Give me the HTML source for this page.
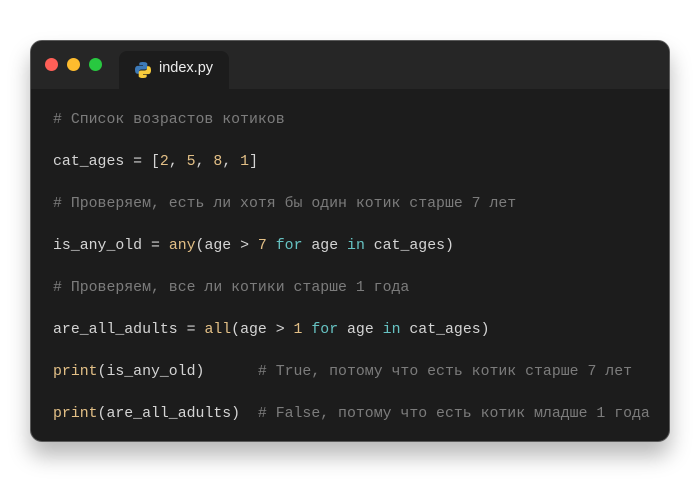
<!DOCTYPE html>
<html><head><meta charset="utf-8"><style>
html,body{margin:0;padding:0;background:#fff;width:700px;height:482px;overflow:hidden}
.win{position:absolute;left:30px;top:40px;width:638px;height:400px;background:#1c1c1c;border:1px solid #5a5a5a;border-radius:12px;box-shadow:0 14px 22px rgba(0,0,0,0.28);overflow:hidden}
.bar{position:absolute;left:0;top:0;right:0;height:48px;background:#262626}
.dot{position:absolute;top:17px;width:13px;height:13px;border-radius:50%}
.tab{position:absolute;left:88px;top:10px;width:110px;height:38px;background:#1c1c1c;border-radius:8px 8px 0 0}
.tab span{position:absolute;left:40px;top:9px;font:14.5px "Liberation Sans",sans-serif;color:#ececec}
.code{position:absolute;left:22px;top:58px;font:14.85px "Liberation Mono","DejaVu Sans Mono",monospace;color:#d4d4d4;line-height:42px;white-space:pre}
.c{color:#7c7c7c}.n{color:#e2bf86}.k{color:#66c2c2}
</style></head><body>
<div class="win">
<div class="bar"></div>
<div class="dot" style="left:14px;background:#fe5f57"></div>
<div class="dot" style="left:36px;background:#febc2e"></div>
<div class="dot" style="left:58px;background:#28c840"></div>
<div class="tab">
<svg style="position:absolute;left:15px;top:10px" width="18" height="18" viewBox="0 0 18 18">
<path d="M8.8 1C5 1 5.3 2.6 5.3 2.6V4.3H9V4.9H3.8S1 4.6 1 8.8s2.4 4 2.4 4H5V10.9s-.1-2.4 2.4-2.4h3.6s2.3 0 2.3-2.2V2.9S13.6 1 8.8 1z" fill="#3d7ab8"/>
<path d="M9.2 17c3.8 0 3.5-1.6 3.5-1.6V13.7H9V13.1h5.2S17 13.4 17 9.2s-2.4-4-2.4-4H13v1.9s.1 2.4-2.4 2.4H7s-2.3 0-2.3 2.2v3.4S4.4 17 9.2 17z" fill="#f7cb3c"/>
</svg>
<span>index.py</span></div>
<div class="code"><span class="c"># Список возрастов котиков</span>
cat_ages = [<span class="n">2</span>, <span class="n">5</span>, <span class="n">8</span>, <span class="n">1</span>]
<span class="c"># Проверяем, есть ли хотя бы один котик старше 7 лет</span>
is_any_old = <span class="n">any</span>(age &gt; <span class="n">7</span> <span class="k">for</span> age <span class="k">in</span> cat_ages)
<span class="c"># Проверяем, все ли котики старше 1 года</span>
are_all_adults = <span class="n">all</span>(age &gt; <span class="n">1</span> <span class="k">for</span> age <span class="k">in</span> cat_ages)
<span class="n">print</span>(is_any_old)      <span class="c"># True, потому что есть котик старше 7 лет</span>
<span class="n">print</span>(are_all_adults)  <span class="c"># False, потому что есть котик младше 1 года</span></div>
</div>
</body></html>
